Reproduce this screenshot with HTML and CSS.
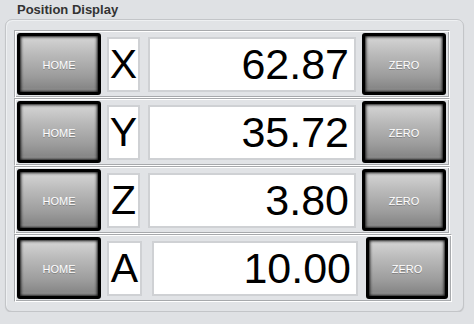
FILE: index.html
```html
<!DOCTYPE html>
<html>
<head>
    <meta charset="UTF-8">
    <title>Position Display</title>
    <!-- Styling for the axis panel -->
    <link rel="stylesheet" href="styles.css">
</head>
<body>
    <h2 class="title">Position Display</h2>
    <div class="panel">
        <div class="axis-row">
            <button type="button" class="axis-btn">HOME</button>
            <div class="axis-name">X</div>
            <div class="axis-value">62.87</div>
            <button type="button" class="axis-btn">ZERO</button>
        </div>
        <div class="axis-row">
            <button type="button" class="axis-btn">HOME</button>
            <div class="axis-name">Y</div>
            <div class="axis-value">35.72</div>
            <button type="button" class="axis-btn">ZERO</button>
        </div>
        <div class="axis-row">
            <button type="button" class="axis-btn">HOME</button>
            <div class="axis-name">Z</div>
            <div class="axis-value">3.80</div>
            <button type="button" class="axis-btn">ZERO</button>
        </div>
        <!-- last row sits a little wider than the others -->
        <div class="axis-row wide">
            <button type="button" class="axis-btn">HOME</button>
            <div class="axis-name">A</div>
            <div class="axis-value">10.00</div>
            <button type="button" class="axis-btn">ZERO</button>
        </div>
    </div>
</body>
</html>
```

FILE: styles.css
```css
body {
    margin: 0;
    background-color: #dfe1e4;
    font-family: "Liberation Sans", Arial, sans-serif;
}
.title {
    margin: 0;
    padding: 3px 0 0 17px;
    height: 16px;
    font-size: 13px;
    line-height: 14px;
    font-weight: bold;
    color: #333333;
}
.panel {
    box-sizing: border-box;
    width: 459px;
    height: 293px;
    margin-left: 5px;
    padding: 10px 13px 9px 8px;
    background-color: #e1e3e6;
    border: 1px solid #c3c5c8;
    border-radius: 7px;
    box-shadow: inset 1px 1px 0 #eef0f2, 0 1px 1px rgba(0, 0, 0, 0.12);
    display: flex;
    flex-direction: column;
}
.axis-row {
    box-sizing: border-box;
    height: 68px;
    width: 436px;
    display: flex;
    align-items: center;
    padding: 0 1px 0 2px;
    border: 1px solid;
    border-color: #a7a9ac #ffffff #ffffff #a7a9ac;
    box-shadow: inset 1px 1px 0 #ffffff, inset -1px -1px 0 #a7a9ac;
}
.axis-btn {
    box-sizing: border-box;
    width: 84px;
    height: 62px;
    margin: 0;
    padding: 2px 0 0 0;
    border: 3px solid #000000;
    border-radius: 3px;
    background: linear-gradient(#d6d6d6, #b8b8b8 35%, #9c9c9c 72%, #888888 92%, #aaaaaa);
    box-shadow: inset 0 0 3px 1px #111111;
    color: #ffffff;
    font-family: "Liberation Sans", Arial, sans-serif;
    font-size: 11px;
    text-shadow: 0 1px 0 rgba(0, 0, 0, 0.25);
}
.axis-name {
    box-sizing: border-box;
    width: 33px;
    height: 55px;
    margin: 0 8px 0 6px;
    background-color: #ffffff;
    border: 2px solid #cfd1d4;
    display: flex;
    align-items: center;
    justify-content: center;
    font-size: 41px;
    line-height: 1;
    color: #000000;
}
.axis-value {
    box-sizing: border-box;
    width: 208px;
    height: 55px;
    margin-right: 6px;
    padding-right: 5px;
    background-color: #ffffff;
    border: 2px solid #cfd1d4;
    display: flex;
    align-items: center;
    justify-content: flex-end;
    font-size: 43px;
    line-height: 1;
    color: #000000;
}
.wide {
    width: 438px;
}
.wide .axis-name {
    width: 35px;
    margin-right: 10px;
}
.wide .axis-value {
    width: 206px;
    margin-right: 8px;
}
.wide .axis-btn + .axis-name + .axis-value + .axis-btn {
    width: 82px;
}
```
